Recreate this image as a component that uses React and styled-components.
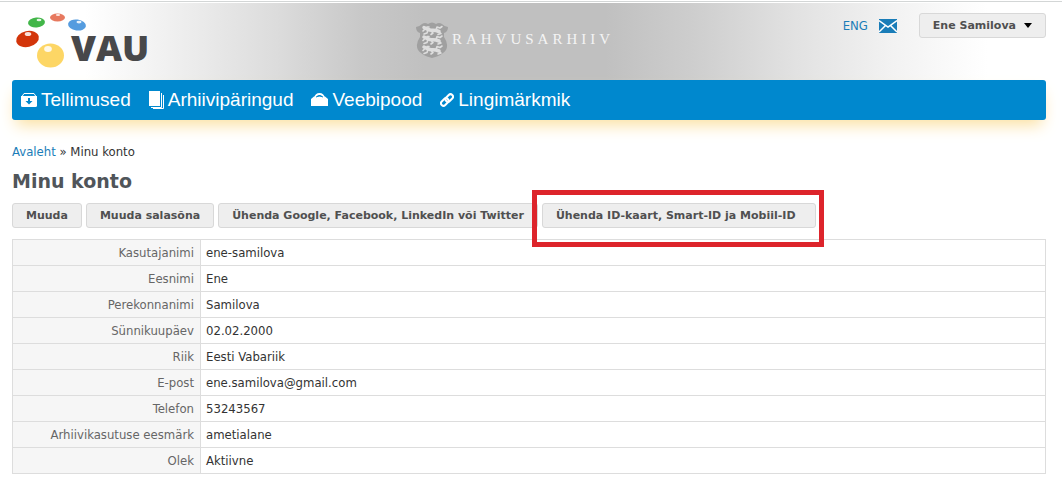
import React from "react";
import styled, { createGlobalStyle } from "styled-components";

const GlobalStyle = createGlobalStyle`
  * { box-sizing: border-box; }
  body {
    margin: 0;
    background: #fff;
    color: #333;
    font: 13px/16px Tahoma, "DejaVu Sans Condensed", "DejaVu Sans", sans-serif;
  }
`;

const Page = styled.div`
  padding: 1px 16px 18px 12px;
`;

const Header = styled.header`
  margin: 0 -16px 0 -12px;
  padding: 0 16px 0 12px;
  border-top: 1px solid #d3d6d6;
  display: grid;
  grid-template-columns: 1fr auto 1fr;
  align-items: start;
  height: 79px;
  background: linear-gradient(
      90deg,
      #fff 8%,
      #f0f0f0 16%,
      #dcdcdc 26%,
      #c8c8c8 34%,
      #c0c0c0 40%,
      #c0c0c0 57%,
      #cdcdcd 65%,
      #e2e2e2 75%,
      #f2f2f2 84%,
      #fff 93%
    )
    0 1px no-repeat;
`;

const LogoLink = styled.a`
  display: flex;
  padding: 10px 0 0 2px;
`;

const Archive = styled.a`
  display: flex;
  align-items: center;
  gap: 4px;
  padding: 20px 28px 0 0;
  color: #f4f4f4;
  font: 15px/20px "Liberation Serif", serif;
  letter-spacing: 4px;
  text-decoration: none;
`;

const ArchiveName = styled.span`
  padding-bottom: 4px;
`;

const Account = styled.div`
  display: flex;
  justify-content: flex-end;
  align-items: center;
  padding-top: 11px;
`;

const Link = styled.a`
  color: #1a7db8;
  text-decoration: none;
`;

const MailLink = styled(Link)`
  display: flex;
  margin: 0 22px 0 11px;
`;

const Button = styled.button`
  display: flex;
  align-items: center;
  gap: 8px;
  height: 25px;
  padding: 0 13px;
  border: 1px solid #d8d8d8;
  border-radius: 3px;
  background: #eee;
  color: #505050;
  font: bold 11px/16px Verdana, "DejaVu Sans", sans-serif;
  white-space: nowrap;
  cursor: pointer;
`;

const Nav = styled.nav`
  display: flex;
  align-items: center;
  gap: 18px;
  height: 40px;
  padding: 0 9px;
  border-radius: 3px;
  background: #0088ce;
  box-shadow: 0 9px 16px -4px #fbe0a0;
`;

const NavLink = styled.a`
  display: flex;
  align-items: center;
  gap: 4px;
  color: #fff;
  font: 19px/24px "Liberation Sans", Arial, sans-serif;
  text-decoration: none;
`;

const Crumbs = styled.nav`
  margin-top: 24px;
`;

const Title = styled.h1`
  margin: 9px 0 10px;
  color: #50555a;
  font: bold 19px/24px Verdana, "DejaVu Sans", sans-serif;
`;

const Actions = styled.div`
  display: flex;
  gap: 4px;
`;

const Highlighted = styled.div`
  position: relative;
  ${Button} {
    min-width: 274px;
  }
  &::after {
    content: "";
    position: absolute;
    inset: -13px -8px -19px -10px;
    border: 5px solid #dd242b;
    pointer-events: none;
  }
`;

const Table = styled.table`
  width: 100%;
  margin-top: 11px;
  border-collapse: collapse;
`;

const Label = styled.th`
  width: 188px;
  height: 26px;
  padding: 0 6px;
  border: 1px solid #ddd;
  background: #f6f6f6;
  color: #666;
  font-weight: normal;
  text-align: right;
`;

const Value = styled.td`
  height: 26px;
  padding: 0 5px;
  border: 1px solid #ddd;
`;

const balls = [
  [13.5, 27, 11.5, 8, -12, "#d3350a", 14, 22],
  [36.5, 43.5, 13.5, 12, 0, "#fdd665", 34, 37],
  [22.5, 10.5, 8.5, 5, -5, "#42b649", 25, 8],
  [43.5, 5.5, 7.5, 4, 0, "#e7795f", 44, 3],
  [63, 13, 9, 5.5, 8, "#559cdf", 65, 10],
];

function VauLogo() {
  return (
    <svg width="138" height="60" viewBox="0 0 138 60" role="img" aria-label="VAU">
      {balls.map(([x, y, rx, ry, turn, fill, sx, sy]) => (
        <g key={fill}>
          <ellipse cx={x} cy={y} rx={rx} ry={ry} fill={fill} transform={`rotate(${turn} ${x} ${y})`} />
          <ellipse cx={sx} cy={sy} rx={rx / 3.5} ry={ry / 4} fill="#fff" opacity="0.85" />
        </g>
      ))}
      <text x="57" y="49" fill="#48484a" fontFamily="Open Sans, sans-serif" fontSize="36" fontWeight="800">VAU</text>
    </svg>
  );
}

function Crest() {
  return (
    <svg width="32" height="37" viewBox="0 0 32 37" aria-hidden="true">
      <path d="M0 5Q3 5 6 2Q9 0 12 2Q16-1 20 2Q23 0 26 2Q29 5 32 5Q32 10 28 11V15Q33 22 30 28Q27 33 16 36Q5 33 2 28Q-1 22 4 15V11Q0 10 0 5Z" fill="#a0a0a0" />
      {[4, 13.5, 23.5].map((y) => (
        <g key={y} transform={`translate(6 ${y})`} fill="none" stroke="#dedede" strokeLinecap="round" strokeLinejoin="round">
          <path d="M2 1.500L5 3L8 4L14 4.500L17 5.500" strokeWidth="3.500" />
          <path d="M3 3L1 5M6 4L5 7L2 8M9 5L11 7L9 8.500M16 5L19 7.500L16 8.500M14 4L15 1L18 2L20 .5M5 1L7 1" strokeWidth="1.600" />
        </g>
      ))}
    </svg>
  );
}

function MailIcon() {
  return (
    <svg width="18" height="14" viewBox="0 0 18 14" role="img" aria-label="E-post">
      <path d="M0 0h18v14H0z" fill="#1a7db8" />
      <path d="M0 1.5L9 8L18 1.5M0 13L6.5 6.5M18 13L11.5 6.5" fill="none" stroke="#fff" strokeWidth="1.5" />
    </svg>
  );
}

const OrderIcon = () => (
  <svg width="16" height="16" viewBox="0 0 16 16" aria-hidden="true">
    <path d="M3 1.500h10l2 3H1z" fill="none" stroke="#fff" />
    <path d="M0 4h16v9.500q0 1.500-1.500 1.500h-13Q0 15 0 13.500z" fill="#fff" />
    <path d="M7 6h2v3h2.500L8 12.500L4.500 9H7z" fill="#0088ce" />
  </svg>
);

const PagesIcon = () => (
  <svg width="15" height="18" viewBox="0 0 15 18" aria-hidden="true">
    <path d="M0 0h11v15H0z" fill="#fff" />
    <path d="M12.500 2v14.500H2M14.500 4v13.500H4" fill="none" stroke="#fff" />
  </svg>
);

const BagIcon = () => (
  <svg width="17" height="14" viewBox="0 0 17 14" aria-hidden="true">
    <path d="M4 5Q5 1 8.500 1T13 5" fill="none" stroke="#fff" strokeWidth="2" />
    <path d="M0 6L3 3.500h11L17 6v7H0z" fill="#fff" />
    <path d="M5 4Q8.500 1.500 12 4" fill="none" stroke="#0088ce" />
  </svg>
);

const ChainIcon = () => (
  <svg width="14" height="14" viewBox="0 0 14 14" fill="none" stroke="#fff" strokeWidth="2" aria-hidden="true">
    <rect x="5" y="2.500" width="8.500" height="5" rx="2.500" transform="rotate(-45 9.250 5)" />
    <rect x=".5" y="6.500" width="8.500" height="5" rx="2.500" transform="rotate(-45 4.750 9)" />
  </svg>
);

const menu = [
  ["Tellimused", OrderIcon],
  ["Arhiivipäringud", PagesIcon],
  ["Veebipood", BagIcon],
  ["Lingimärkmik", ChainIcon],
];

const rows = [
  ["Kasutajanimi", "ene-samilova"],
  ["Eesnimi", "Ene"],
  ["Perekonnanimi", "Samilova"],
  ["Sünnikuupäev", "02.02.2000"],
  ["Riik", "Eesti Vabariik"],
  ["E-post", "ene.samilova@gmail.com"],
  ["Telefon", "53243567"],
  ["Arhiivikasutuse eesmärk", "ametialane"],
  ["Olek", "Aktiivne"],
];

export default function App() {
  return (
    <>
      <GlobalStyle />
      <Page>
        <Header>
          <LogoLink href="#"><VauLogo /></LogoLink>
          <Archive href="#">
            <Crest />
            <ArchiveName>RAHVUSARHIIV</ArchiveName>
          </Archive>
          <Account>
            <Link href="#">ENG</Link>
            <MailLink href="#"><MailIcon /></MailLink>
            <Button type="button">
              Ene Samilova
              <svg width="8" height="5" viewBox="0 0 8 5" aria-hidden="true"><path d="M0 0h8L4 5z" fill="#000" /></svg>
            </Button>
          </Account>
        </Header>
        <Nav>
          {menu.map(([name, Icon]) => (
            <NavLink href="#" key={name}><Icon />{name}</NavLink>
          ))}
        </Nav>
        <main>
          <Crumbs><Link href="#">Avaleht</Link> » Minu konto</Crumbs>
          <Title>Minu konto</Title>
          <Actions>
            <Button type="button">Muuda</Button>
            <Button type="button">Muuda salasõna</Button>
            <Button type="button">Ühenda Google, Facebook, LinkedIn või Twitter</Button>
            <Highlighted>
              <Button type="button">Ühenda ID-kaart, Smart-ID ja Mobiil-ID</Button>
            </Highlighted>
          </Actions>
          <Table>
            <tbody>
              {rows.map(([label, value]) => (
                <tr key={label}>
                  <Label scope="row">{label}</Label>
                  <Value>{value}</Value>
                </tr>
              ))}
            </tbody>
          </Table>
        </main>
      </Page>
    </>
  );
}
